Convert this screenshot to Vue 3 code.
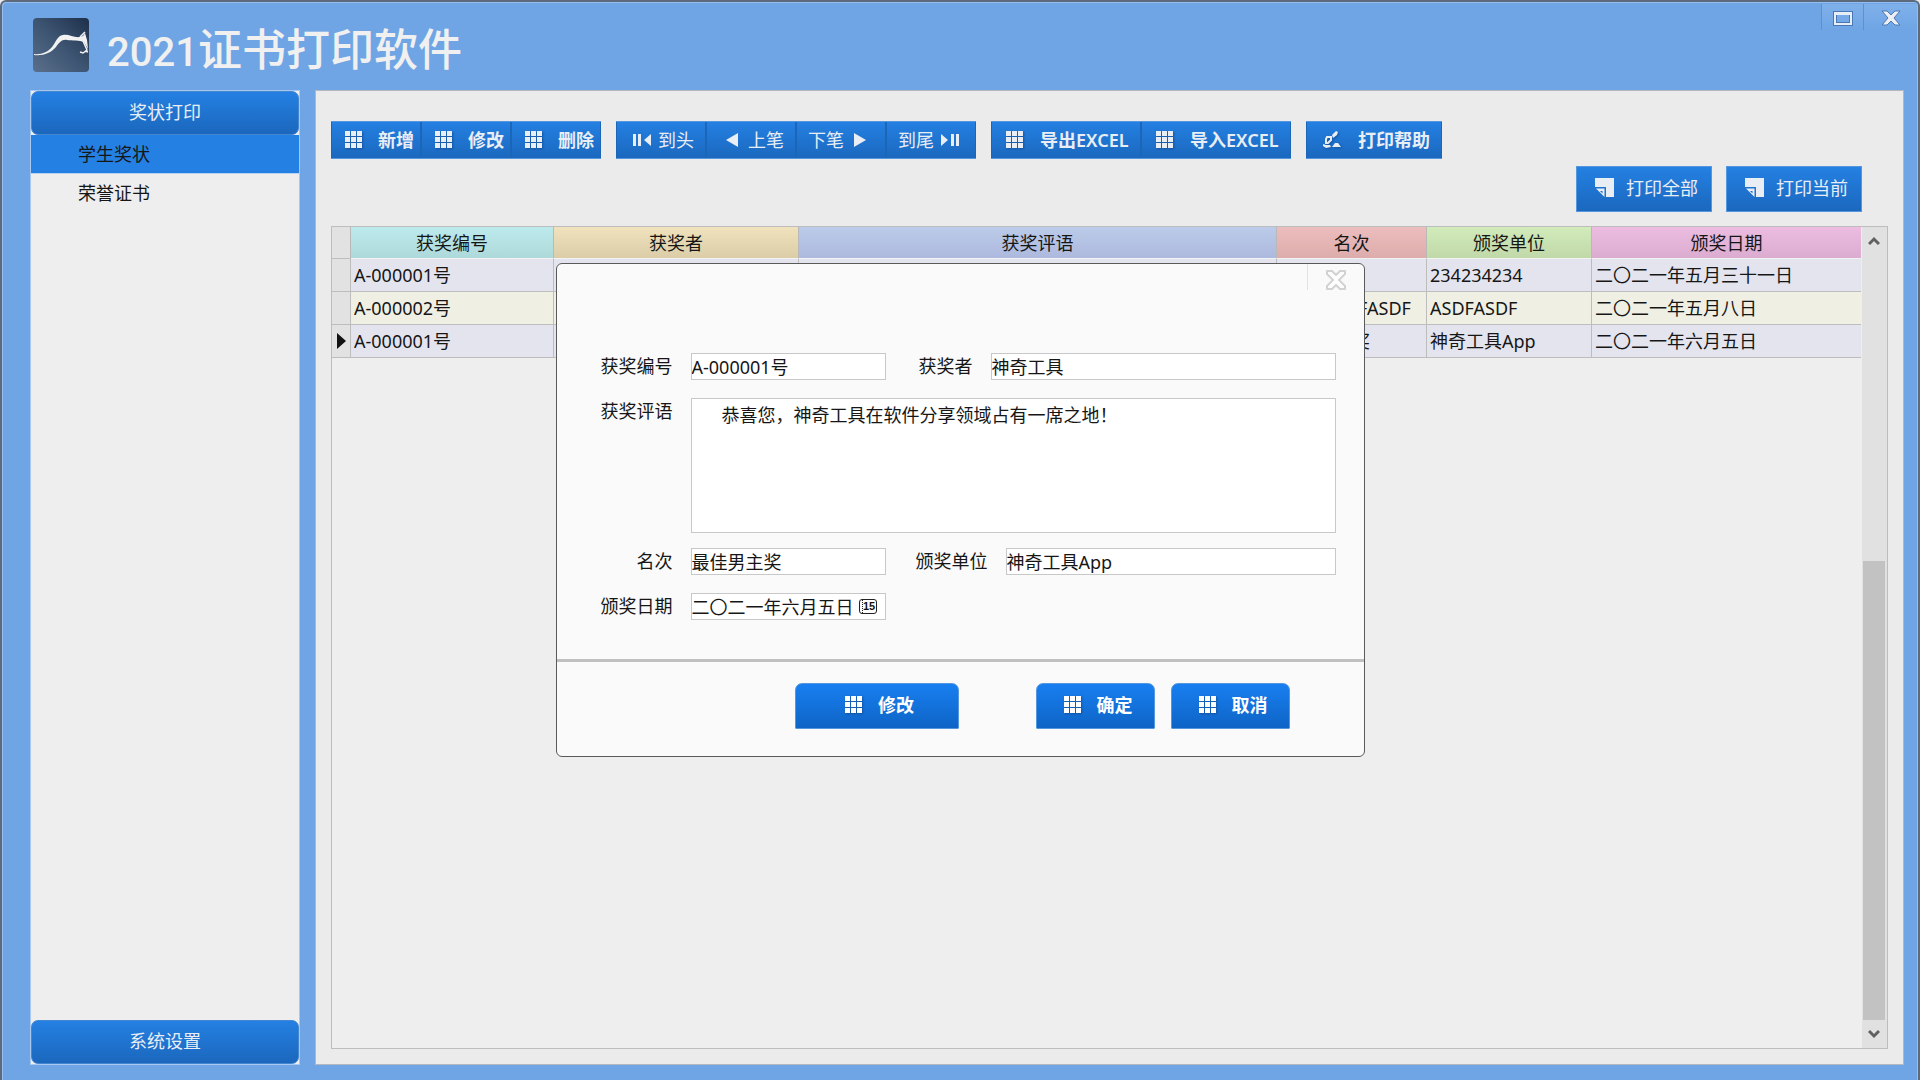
<script setup>
import { ref } from 'vue'

const menu = ['学生奖状', '荣誉证书']
const active = ref('学生奖状')

const editTools = ['新增', '修改', '删除']
const excelTools = ['导出EXCEL', '导入EXCEL']
const printTools = ['打印全部', '打印当前']

const columns = [
  { key: 'no', title: '获奖编号' },
  { key: 'winner', title: '获奖者' },
  { key: 'remark', title: '获奖评语' },
  { key: 'rank', title: '名次' },
  { key: 'issuer', title: '颁奖单位' },
  { key: 'date', title: '颁奖日期' }
]

const rows = [
  { no: 'A-000001号', winner: '', remark: '', rank: '', issuer: '234234234', date: '二〇二一年五月三十一日' },
  { no: 'A-000002号', winner: '', remark: '', rank: 'ASDFASDFASDF', issuer: 'ASDFASDF', date: '二〇二一年五月八日' },
  { no: 'A-000001号', winner: '神奇工具', remark: '', rank: '最佳男主奖', issuer: '神奇工具App', date: '二〇二一年六月五日' }
]
const current = ref(2)

const form = ref({
  no: 'A-000001号',
  winner: '神奇工具',
  remark: '恭喜您，神奇工具在软件分享领域占有一席之地！',
  rank: '最佳男主奖',
  issuer: '神奇工具App',
  date: '二〇二一年六月五日'
})
</script>

<template>
  <div class="window">
    <svg width="0" height="0" class="defs" aria-hidden="true">
      <symbol id="grid" viewBox="0 0 18 18">
        <path d="M0 0h5v5H0zM6 0h5v5H6zM12 0h5v5h-5zM0 6h5v5H0zM6 6h5v5H6zM12 6h5v5h-5zM0 12h5v5H0zM6 12h5v5H6zM12 12h5v5h-5z" fill="currentColor" />
      </symbol>
      <symbol id="sheet" viewBox="0 0 20 20">
        <path d="M0 0h19v19H11V9H0z" fill="currentColor" />
        <path d="M1 10.500h8.500V19z" fill="currentColor" />
        <path d="M5 13h2.500v2.500z" fill="#1f6fc8" />
      </symbol>
      <symbol id="pen" viewBox="0 0 18 18">
        <path d="M9 4l4-4 2 1-1 3-4 3z" fill="currentColor" />
        <path d="M4 6h4v3l-3 3H3V8z" fill="none" stroke="currentColor" stroke-width="2" />
        <path d="M0 13l3 1 4 0 1 2-5 1-3-2zM9 16l3-4h3l3 4z" fill="currentColor" />
      </symbol>
    </svg>

    <header class="title-bar">
      <svg class="logo" viewBox="0 0 56 54">
        <defs>
          <linearGradient id="logo-bg" x1="0" y1="1" x2="1" y2="0">
            <stop offset="0" stop-color="#5a6f8c" />
            <stop offset=".5" stop-color="#3d5572" />
            <stop offset="1" stop-color="#1d2f4a" />
          </linearGradient>
        </defs>
        <rect width="56" height="54" rx="4" fill="url(#logo-bg)" />
        <path d="M1 36c7 1 14-2 18-7 4-5 5-11 11-12 6-1 11 3 17 2l3-1 2-3 2 7 1 9-4-7c-5-2-11-1-17-2-5-1-8 3-11 7-5 6-13 9-22 8z" fill="#f2f2f2" />
        <path d="M47 19l5-5M50 23l4 9-4 3-3-1M52 33l3 1" fill="none" stroke="#f2f2f2" stroke-width="1.500" />
      </svg>
      <h1><span class="year">2021</span>证书打印软件</h1>
      <div class="window-controls">
        <button type="button" class="ctl maximize" aria-label="最大化">
          <svg width="20" height="16" viewBox="0 0 20 16">
            <path d="M2 3h16v11H2z" fill="none" stroke="#4a78b4" stroke-width="4" />
            <path d="M2 3h16v11H2zM2 4h16" fill="none" stroke="#e8eef6" stroke-width="2" />
          </svg>
        </button>
        <button type="button" class="ctl close" aria-label="关闭">
          <svg width="20" height="18" viewBox="0 0 20 18">
            <path d="M1 2h5l4 4 4-4h5l-6 7 6 7h-5l-4-4-4 4H1l6-7z" fill="#eeeff2" stroke="#4a78b4" stroke-width="1" />
          </svg>
        </button>
      </div>
    </header>

    <div class="body">
      <nav class="sidebar">
        <button type="button" class="section">奖状打印</button>
        <ul>
          <li v-for="m in menu" :key="m">
            <a href="#" :class="{ active: m === active }" @click.prevent="active = m">{{ m }}</a>
          </li>
        </ul>
        <button type="button" class="section">系统设置</button>
      </nav>

      <main class="panel">
        <div class="toolbar">
          <div class="group">
            <button v-for="t in editTools" :key="t" type="button" class="tool edit">
              <svg class="icon"><use href="#grid" /></svg>{{ t }}
            </button>
          </div>
          <div class="group">
            <button type="button" class="tool nav back">
              <svg class="arrow" viewBox="0 0 20 14"><path d="M1 1h3v12H1zM6 1h3v12H6zM19 1v12l-7-6z" fill="currentColor" /></svg>到头
            </button>
            <button type="button" class="tool nav back">
              <svg class="arrow" viewBox="0 0 20 14"><path d="M16 0v14L4 7z" fill="currentColor" /></svg>上笔
            </button>
            <button type="button" class="tool nav">
              下笔<svg class="arrow" viewBox="0 0 20 14"><path d="M4 0v14l12-7z" fill="currentColor" /></svg>
            </button>
            <button type="button" class="tool nav">
              到尾<svg class="arrow" viewBox="0 0 20 14"><path d="M1 1v12l7-6zM11 1h3v12h-3zM16 1h3v12h-3z" fill="currentColor" /></svg>
            </button>
          </div>
          <div class="group">
            <button v-for="t in excelTools" :key="t" type="button" class="tool excel">
              <svg class="icon"><use href="#grid" /></svg>{{ t }}
            </button>
          </div>
          <div class="group">
            <button type="button" class="tool help">
              <svg class="icon"><use href="#pen" /></svg>打印帮助
            </button>
          </div>
        </div>

        <div class="print-bar">
          <button v-for="t in printTools" :key="t" type="button" class="print">
            <svg class="sheet-icon"><use href="#sheet" /></svg>{{ t }}
          </button>
        </div>

        <div class="grid-frame">
          <div class="grid-scroll">
            <table>
              <colgroup>
                <col class="c-mark" /><col class="c-no" /><col class="c-winner" /><col />
                <col class="c-rank" /><col class="c-issuer" /><col class="c-date" />
              </colgroup>
              <thead>
                <tr>
                  <th class="mark"></th>
                  <th v-for="c in columns" :key="c.key" :class="'h-' + c.key">{{ c.title }}</th>
                </tr>
              </thead>
              <tbody>
                <tr v-for="(r, i) in rows" :key="i" @click="current = i">
                  <td class="mark">
                    <svg v-if="i === current" width="9" height="16" viewBox="0 0 9 16"><path d="M0 0v16l9-8z" fill="#111" /></svg>
                  </td>
                  <td v-for="c in columns" :key="c.key">{{ r[c.key] }}</td>
                </tr>
              </tbody>
            </table>
          </div>
          <div class="scrollbar">
            <button type="button" aria-label="向上滚动">
              <svg width="12" height="10" viewBox="0 0 12 10"><path d="M1 8l5-5 5 5" fill="none" stroke="#606060" stroke-width="3" /></svg>
            </button>
            <div class="track"><div class="thumb"></div></div>
            <button type="button" aria-label="向下滚动">
              <svg width="12" height="10" viewBox="0 0 12 10"><path d="M1 2l5 5 5-5" fill="none" stroke="#606060" stroke-width="3" /></svg>
            </button>
          </div>
        </div>
      </main>
    </div>

    <div class="overlay">
      <form class="dialog" role="dialog" aria-label="获奖信息" @submit.prevent>
        <div class="dialog-head">
          <button type="button" class="dialog-close" aria-label="关闭">
            <svg width="22" height="20" viewBox="0 0 22 20">
              <path d="M2 1h5l4 4 4-4h5v3l-6 6 6 6v3h-5l-4-4-4 4H2v-3l6-6-6-6z" fill="#fdfdfd" stroke="#d2d2d2" stroke-width="2" stroke-linejoin="round" />
            </svg>
          </button>
        </div>
        <div class="fields">
          <div class="row">
            <label for="f-no" class="lead">获奖编号</label>
            <input id="f-no" v-model="form.no" class="short" type="text" />
            <label for="f-winner" class="near">获奖者</label>
            <input id="f-winner" v-model="form.winner" class="grow" type="text" />
          </div>
          <div class="row">
            <label for="f-remark" class="lead">获奖评语</label>
            <textarea id="f-remark" v-model="form.remark" class="grow"></textarea>
          </div>
          <div class="row tight">
            <label for="f-rank" class="lead">名次</label>
            <input id="f-rank" v-model="form.rank" class="short" type="text" />
            <label for="f-issuer" class="far">颁奖单位</label>
            <input id="f-issuer" v-model="form.issuer" class="grow" type="text" />
          </div>
          <div class="row">
            <label for="f-date" class="lead">颁奖日期</label>
            <div class="date-box short">
              <input id="f-date" v-model="form.date" type="text" />
              <button type="button" class="calendar" aria-label="选择日期"><span>15</span></button>
            </div>
          </div>
        </div>
        <div class="dialog-foot">
          <button type="button" class="act wide"><svg class="icon"><use href="#grid" /></svg>修改</button>
          <div class="pair">
            <button type="submit" class="act"><svg class="icon"><use href="#grid" /></svg>确定</button>
            <button type="button" class="act"><svg class="icon"><use href="#grid" /></svg>取消</button>
          </div>
        </div>
      </form>
    </div>
  </div>
</template>

<style>
body {
  background: #e8eaee;
}
</style>

<style scoped>
* {
  box-sizing: border-box;
}

.window {
  position: relative;
  display: flex;
  flex-direction: column;
  min-height: 100vh;
  padding: 0 14px 15px 28px;
  border: 2px solid #5d6a7c;
  border-bottom: 0;
  border-radius: 6px 6px 0 0;
  box-shadow: inset 1px 1px #96bdf0, inset -1px 0 #96bdf0;
  background: #6fa5e5;
  font-family: "Noto Sans", "Noto Sans CJK SC", sans-serif;
  font-size: 18px;
  line-height: 24px;
  color: #161616;
}

.defs {
  position: absolute;
}

button,
input,
textarea {
  font: inherit;
  margin: 0;
  padding: 0;
}

button {
  border: 0;
  background: none;
  color: #e9eef5;
  white-space: nowrap;
}

.icon {
  width: 18px;
  height: 18px;
  flex: none;
  filter: drop-shadow(1px 1px 1px #14519c);
}

/* title bar */
.title-bar {
  display: flex;
  align-items: flex-start;
  height: 88px;
  padding-left: 3px;
}

.logo {
  width: 56px;
  height: 54px;
  margin-top: 16px;
}

h1 {
  margin: 15px 0 0 18px;
  font: 500 44px/60px "Noto Sans CJK SC", sans-serif;
  color: #f0f0f0;
}

.year {
  font-family: Roboto, sans-serif;
  font-size: 40px;
}

.window-controls {
  display: flex;
  margin: 2px -13px 0 auto;
}

.ctl {
  display: flex;
  justify-content: center;
  height: 26px;
  border-left: 1px solid #5d90d2;
  background: linear-gradient(#7fb0ea, #6fa5e5);
}

.maximize {
  width: 42px;
  padding-top: 6px;
}

.close {
  width: 54px;
  padding-top: 5px;
}

/* frame below the title */
.body {
  flex: 1;
  display: flex;
  gap: 15px;
}

.sidebar {
  display: flex;
  flex-direction: column;
  flex: none;
  width: 270px;
  border: 1px solid #a9c8ef;
  background: #eee;
}

.section {
  height: 44px;
  padding-bottom: 2px;
  border: 1px solid #4386d2;
  border-radius: 7px;
  background: linear-gradient(#2480e2, #1b67bd);
}

ul {
  flex: 1;
  margin: 0;
  padding: 0;
  list-style: none;
}

li a {
  display: block;
  height: 39px;
  padding-left: 47px;
  line-height: 39px;
  color: #161616;
  text-decoration: none;
}

li .active {
  background: #2480e2;
  border-bottom: 1px solid #b9d2f0;
}

.panel {
  flex: 1;
  display: flex;
  flex-direction: column;
  min-width: 0;
  padding: 30px 15px 15px;
  border: 1px solid #b3b8bf;
  background: #ebebeb;
}

.toolbar {
  display: flex;
  gap: 15px;
}

.group {
  display: flex;
  background: #1c66b8;
}

.tool {
  display: flex;
  align-items: center;
  height: 38px;
  border: solid #5597df;
  border-width: 1px 0;
  font-weight: 600;
  background: linear-gradient(#2480e2, #1b68be);
  box-shadow: inset 1px 0 #1c66b8, inset -1px 0 #1c66b8;
}

.edit {
  width: 90px;
  padding-left: 14px;
  gap: 15px;
}

.nav {
  width: 90px;
  gap: 6px;
  padding: 0 12px;
  font-weight: 400;
}

.back {
  justify-content: flex-end;
}

.arrow {
  flex: none;
  width: 20px;
  height: 14px;
}

.excel {
  width: 150px;
  padding-left: 15px;
  gap: 16px;
}

.help {
  width: 136px;
  padding-left: 17px;
  gap: 17px;
}

.print-bar {
  display: flex;
  justify-content: flex-end;
  gap: 14px;
  margin-top: 7px;
  padding-right: 26px;
}

.print {
  display: flex;
  align-items: center;
  gap: 11px;
  width: 136px;
  height: 46px;
  padding: 0 0 2px 18px;
  border: 1px solid #5597df;
  background: linear-gradient(#2480e2, #1b68be);
}

.sheet-icon {
  flex: none;
  width: 20px;
  height: 20px;
}

/* record table */
.grid-frame {
  flex: 1;
  display: flex;
  margin-top: 14px;
  border: 1px solid #bdbdbd;
  background: #eee;
}

.grid-scroll {
  flex: 1;
  min-width: 0;
}

table {
  width: 100%;
  table-layout: fixed;
  border-collapse: separate;
  border-spacing: 0;
}

.c-mark { width: 19px; }
.c-no { width: 203px; }
.c-winner { width: 245px; }
.c-rank { width: 150px; }
.c-issuer { width: 165px; }
.c-date { width: 269px; }

th {
  height: 32px;
  padding: 0;
  border-right: 1px solid #b9b9b9;
  border-bottom: 1px solid #f3f3f3;
  font-weight: 400;
}

th.mark { background: #e2e2e2; border-bottom-color: #bdbdbd; }
.h-no { background: linear-gradient(#bdeaec, #aed9db); }
.h-winner { background: linear-gradient(#f0e2bd, #dccda9); }
.h-remark { background: linear-gradient(#bccbe9, #adb9de); }
.h-rank { background: linear-gradient(#ecbdbd, #dcadab); }
.h-issuer { background: linear-gradient(#d2ebba, #c1d9a8); }
.h-date { background: linear-gradient(#ecbde1, #dbacd0); }

td {
  height: 33px;
  padding: 0 3px;
  border-right: 1px solid #bdbdbd;
  border-bottom: 1px solid #bdbdbd;
  background: #e4e4ef;
  overflow: hidden;
  white-space: nowrap;
}

tr:nth-child(even) td {
  background: #efefe4;
}

th:last-child,
td:last-child {
  border-right: 0;
}

tbody td.mark {
  padding: 0 0 0 5px;
  background: #e2e2e2;
}

td.mark svg {
  display: block;
}

.scrollbar {
  display: flex;
  flex-direction: column;
  flex: none;
  width: 26px;
  padding: 0 2px 0 1px;
  background: #e1e1e1;
  border-left: 1px solid #eee;
}

.scrollbar button {
  display: flex;
  align-items: center;
  justify-content: center;
  height: 28px;
}

.track {
  flex: 1;
  display: flex;
  flex-direction: column;
  justify-content: flex-end;
}

.thumb {
  height: 60%;
  background: #c2c2c2;
}

/* edit dialog */
.overlay {
  position: absolute;
  inset: 0;
  display: flex;
  align-items: center;
  justify-content: center;
  padding-bottom: 62px;
}

.dialog {
  width: 809px;
  border: 1px solid #5a5a5a;
  border-radius: 6px;
  background: #fafafa;
}

.dialog-head {
  display: flex;
  justify-content: flex-end;
  height: 89px;
}

.dialog-close {
  width: 57px;
  height: 26px;
  padding-top: 6px;
  border-left: 1px solid #e2e2e2;
}

.dialog-close svg {
  display: block;
  margin: 0 auto;
}

.fields {
  display: flex;
  flex-direction: column;
  gap: 18px;
  padding: 0 28px 39px 0;
}

.row {
  display: flex;
}

.tight {
  margin-top: -3px;
}

label {
  flex: none;
  margin-right: 18px;
  line-height: 27px;
  text-align: right;
}

.lead { width: 116px; }
.near { width: 87px; }
.far { width: 102px; }

input,
textarea,
.date-box {
  height: 27px;
  border: 1px solid #c8c8c8;
  border-radius: 0;
  background: #fff;
  color: #161616;
  outline: 0;
}

.short {
  flex: none;
  width: 195px;
}

.grow {
  flex: 1;
  min-width: 0;
}

input {
  padding-bottom: 1px;
}

textarea {
  height: 135px;
  padding-top: 4px;
  text-indent: 30px;
  resize: none;
}

.date-box {
  display: flex;
  align-items: center;
}

.date-box input {
  width: 163px;
  height: 25px;
  border: 0;
}

.calendar {
  width: 18px;
  height: 15px;
  margin-left: 4px;
  border: 1px solid #222;
  border-radius: 3px;
  color: #111;
  font: 700 11px/13px "Liberation Sans", sans-serif;
}

.calendar span {
  display: block;
  margin-left: 2px;
  border-left: 1px dotted #222;
}

.dialog-foot {
  display: flex;
  justify-content: flex-end;
  gap: 77px;
  padding: 21px 74px 27px;
  border-top: 3px solid #c0c0c0;
}

.pair {
  display: flex;
  gap: 16px;
}

.act {
  display: flex;
  align-items: center;
  justify-content: center;
  gap: 15px;
  width: 119px;
  height: 46px;
  padding: 0 0 3px 6px;
  border: 1px solid #5597df;
  border-radius: 7px 7px 1px 1px;
  background: linear-gradient(#187ff0, #0e64c6);
  color: #fff;
  font-weight: 600;
}

.wide {
  width: 164px;
}
</style>
